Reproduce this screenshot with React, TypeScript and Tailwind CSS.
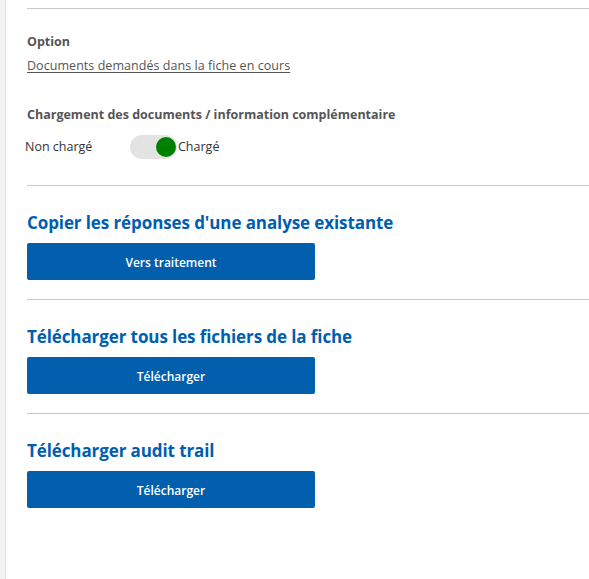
import React from "react";

const font = { fontFamily: '"Open Sans", "Noto Sans", "Liberation Sans", sans-serif' };

function Rule() {
  return <div className="h-px bg-[#c8c8c8]" />;
}

function ActionSection({ title, label }: { title: string; label: string }) {
  return (
    <div>
      <Rule />
      <h2 className="mt-[25px] text-[17px] leading-[24px] font-bold text-[#005eb0] tracking-[-0.1px]">{title}</h2>
      <button className="mt-[8px] flex h-[37px] w-[288px] items-center justify-center rounded-[2px] bg-[#015fae] pt-[2px] text-[12px] font-semibold text-white">
        {label}
      </button>
      <div className="h-[19px]" />
    </div>
  );
}

export default function App() {
  return (
    <div className="flex min-h-[579px] w-[589px] bg-white" style={font}>
      <div className="w-[6px] bg-[#f3f3f3] border-r border-[#e3e3e3]" />
      <div className="flex-1 pl-[21px] pt-[8px]">
        <Rule />
        <div className="mt-[25px] text-[12.5px] leading-[16px] font-bold text-[#555]">Option</div>
        <a className="mt-[8px] block text-[12.5px] leading-[16px] text-[#555] underline underline-offset-2 tracking-[0.05px]">
          Documents demandés dans la fiche en cours
        </a>
        <div className="mt-[33px] text-[12.5px] leading-[16px] font-bold text-[#555]">
          Chargement des documents / information complémentaire
        </div>
        <div className="mt-[12px] flex h-[24px] items-center -ml-[2px]">
          <span className="w-[105px] text-[12.5px] text-[#333]">Non chargé</span>
          <div className="relative h-[24px] w-[47px] rounded-full bg-[#e3e3e3]">
            <div className="absolute right-[1px] top-[2px] h-[20px] w-[20px] rounded-full bg-[#008000]" />
          </div>
          <span className="ml-[1px] text-[12.5px] text-[#333]">Chargé</span>
        </div>
        <div className="h-[26px]" />
        <ActionSection title="Copier les réponses d'une analyse existante" label="Vers traitement" />
        <ActionSection title="Télécharger tous les fichiers de la fiche" label="Télécharger" />
        <ActionSection title="Télécharger audit trail" label="Télécharger" />
      </div>
    </div>
  );
}
